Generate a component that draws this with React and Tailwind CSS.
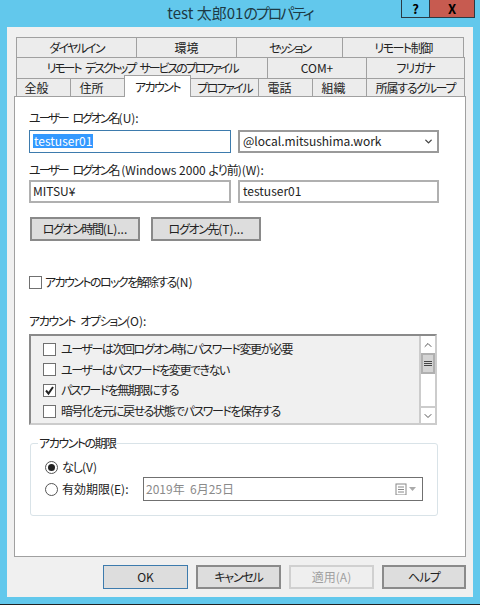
import { ChevronDown, ChevronUp } from 'lucide-react';

const font = { fontFamily: '"Noto Sans CJK JP", "Liberation Sans", sans-serif' };

function Tab({ label, w, className = '' }) {
  return (
    <div style={{ width: w }} className={`flex items-center justify-center border border-b-0 border-[#a0a0a0] -mr-px bg-[#ececec] text-[12px] text-[#222] leading-none whitespace-nowrap ${className}`}>
      {label}
    </div>
  );
}

function Check({ checked }) {
  return (
    <span className="w-[13px] h-[13px] border border-[#707070] bg-white shrink-0 flex items-center justify-center tracking-normal">
      {checked && (
        <svg width="11" height="11" viewBox="0 0 11 11">
          <path d="M2 5.500 L4.500 8.500 L9 2" fill="none" stroke="#222" strokeWidth="2" />
        </svg>
      )}
    </span>
  );
}

function Btn({ children, className = '' }) {
  return (
    <div className={`flex items-center justify-center bg-[#dddddd] border-2 border-[#8a8a8a] text-[12px] text-[#222] whitespace-nowrap ${className}`}>
      {children}
    </div>
  );
}

export default function App() {
  return (
    <div style={font} className="w-[480px] h-[605px] bg-[#62c8ec] flex flex-col overflow-hidden [font-feature-settings:'palt']">
      {/* title bar */}
      <div className="h-[27px] relative flex items-center justify-center text-[15px] text-[#1d3a44] whitespace-pre">
        test 太郎01<span className="tracking-[-2px]">のプロパティ</span>
        <div className="absolute top-0 right-[5px] flex">
          <div className="w-[29px] h-[18px] bg-[#62c8ec] border border-t-0 border-[#2a3a44] flex items-center justify-center text-[13px] font-bold text-black">?</div>
          <div className="w-[45px] h-[18px] bg-[#c75b50] border border-t-0 border-l-0 border-[#2a3a44] flex items-center justify-center text-[13px] font-bold text-black">X</div>
        </div>
      </div>

      {/* dialog body */}
      <div className="mx-[7px] h-[570px] bg-[#f0f0f0] px-[7px] pt-[10px] flex flex-col">
        <div className="h-[59px] flex flex-col">
          <div className="flex h-[20px] ml-[2px]">
            <Tab label="ダイヤルイン" w={121} className="tracking-[-1.7px]" />
            <Tab label="環境" w={101} />
            <Tab label="セッション" w={107} className="tracking-[-2.2px]" />
            <Tab label="リモート制御" w={122} className="tracking-[-1.5px]" />
          </div>
          <div className="flex h-[21px] ml-[2px]">
            <Tab label="リモート デスクトップ サービスのプロファイル" w={252} className="tracking-[-2.1px] [word-spacing:4px]" />
            <Tab label="COM+" w={100} />
            <Tab label="フリガナ" w={99} className="tracking-[-1.2px]" />
          </div>
          <div className="h-[18px] flex ml-[2px]">
            <Tab label="全般" w={55} className="pr-[14px]" />
            <Tab label="住所" w={55} className="pr-[12px]" />
            <div className="w-[67px] h-[22px] -mt-[3px] z-10 bg-white border border-b-0 border-[#a0a0a0] -mr-px flex items-center justify-center text-[12px] text-[#222] leading-none tracking-[-1.6px]">アカウント</div>
            <Tab label="プロファイル" w={69} className="tracking-[-1.6px]" />
            <Tab label="電話" w={55} className="pr-[12px]" />
            <Tab label="組織" w={55} className="pr-[12px]" />
            <Tab label="所属するグループ" w={99} className="tracking-[-1.3px]" />
          </div>
        </div>

        {/* account tab */}
        <div className="w-[452px] h-[461px] bg-white border border-[#a0a0a0] pl-[14px] pt-[14px] text-[12px] text-[#222] leading-none">
          <div className="h-[14px] pt-px tracking-[-2px] [word-spacing:4px]">ユーザー ログオン名<span className="tracking-normal">(U):</span></div>
          <div className="flex gap-[7px] mt-[5px]">
            <div className="w-[202px] h-[23px] border border-[#3d7bad] pl-[3px] pb-[2px] flex items-center">
              <span className="bg-[#3399ff] text-white px-px py-px">testuser01</span>
            </div>
            <div className="w-[201px] h-[23px] border-2 border-[#9a9a9a] pl-[3px] pb-px flex items-center justify-between pr-[3px]">
              @local.mitsushima.work
              <ChevronDown size={11} strokeWidth={3} color="#444" />
            </div>
          </div>
          <div className="h-[14px] pt-px mt-[10px] whitespace-pre">
            <span className="tracking-[-2px] [word-spacing:4px]">ユーザー ログオン名</span>
            <span> (Windows 2000 </span>
            <span className="tracking-[-1px]">より前</span>
            <span>)(W):</span>
          </div>
          <div className="flex gap-[7px] mt-[3px]">
            <div className="w-[202px] h-[23px] border-2 border-[#b0b0b0] pl-[2px] pb-[2px] flex items-center">MITSU¥</div>
            <div className="w-[201px] h-[23px] border-2 border-[#b0b0b0] pl-[3px] pb-[2px] flex items-center">testuser01</div>
          </div>
          <div className="flex gap-[11px] mt-[14px] ml-px">
            <Btn className="w-[110px] h-[24px]"><span className="tracking-[-1.4px]">ログオン時間</span>(L)...</Btn>
            <Btn className="w-[110px] h-[24px]"><span className="tracking-[-1.3px]">ログオン先</span>(T)...</Btn>
          </div>
          <div className="flex items-center gap-[3px] mt-[34px] h-[14px]">
            <Check />
            <span><span className="tracking-[-1.6px]">アカウントのロックを解除する</span>(N)</span>
          </div>
          <div className="h-[14px] pt-px mt-[25px]"><span className="tracking-[-1.4px] [word-spacing:4px]">アカウント オプション</span>(O):</div>
          <div className="w-[408px] h-[91px] mt-[6px] border-2 border-t-[#8a8a8a] border-l-[#8a8a8a] border-r-[#cccccc] border-b-[#cccccc] bg-[#f0f0f0] flex">
            <div className="flex-1 pl-[12px] pt-[6px] flex flex-col gap-[6.7px] tracking-[-1.45px]">
              {[
                ['ユーザーは次回ログオン時にパスワード変更が必要', false],
                ['ユーザーはパスワードを変更できない', false],
                ['パスワードを無期限にする', true],
                ['暗号化を元に戻せる状態でパスワードを保存する', false],
              ].map(([label, on]) => (
                <div key={label} className="flex items-center gap-[5px] h-[14px]">
                  <Check checked={on} />
                  {label}
                </div>
              ))}
            </div>
            <div className="w-[16px] bg-white border-l-2 border-[#cccccc] flex flex-col">
              <div className="h-[17px] flex items-center justify-center"><ChevronUp size={12} color="#555" /></div>
              <div className="h-[21px] bg-[#d4d4d4] border-2 border-[#b0b0b0] flex flex-col items-center justify-center gap-px">
                <div className="w-[8px] h-px bg-[#444]" />
                <div className="w-[8px] h-px bg-[#444]" />
                <div className="w-[8px] h-px bg-[#444]" />
              </div>
              <div className="flex-1" />
              <div className="h-[17px] border-t-2 border-[#cccccc] flex items-center justify-center"><ChevronDown size={12} color="#555" /></div>
            </div>
          </div>

          {/* expiry group */}
          <div className="relative w-[408px] h-[73px] ml-px mt-[18px] border border-[#d9e3e8] rounded-[3px] pl-[14px] pt-[16px]">
            <span className="absolute -top-[7px] left-[7px] bg-white px-px tracking-[-1.5px]">アカウントの期限</span>
            <div className="flex items-center gap-[4px] h-[14px]">
              <span className="w-[13px] h-[13px] rounded-full border border-[#555] flex items-center justify-center">
                <span className="w-[7px] h-[7px] rounded-full bg-[#222]" />
              </span>
              <span><span className="tracking-[-1px]">なし</span>(V)</span>
            </div>
            <div className="flex items-center gap-[4px] mt-[3px]">
              <span className="w-[13px] h-[13px] rounded-full border border-[#555]" />
              <span className="w-[77px]">有効期限(E):</span>
              <div className="w-[280px] h-[24px] border border-[#707070] flex items-center justify-between pl-[2px] pr-[3px] text-[#8a8a8a]">
                2019年 &nbsp;6月25日
                <svg width="24" height="12" viewBox="0 0 24 12">
                  <rect x="1" y="1" width="10" height="11" fill="none" stroke="#888" />
                  <path d="M3 4h6M3 6.500h6M3 9h6" stroke="#888" />
                  <path d="M14 4h7l-3.500 4z" fill="#aaa" />
                </svg>
              </div>
            </div>
          </div>
        </div>

        {/* footer buttons */}
        <div className="flex justify-end gap-[8px] mt-[8px]">
          <div className="w-[85px] h-[24px] bg-[#dddddd] border border-[#3d7bad] flex items-center justify-center text-[12px] text-[#222]">OK</div>
          <Btn className="w-[85px] h-[24px] tracking-[-1.2px]">キャンセル</Btn>
          <div className="w-[85px] h-[24px] bg-[#efefef] border-2 border-[#d0d0d0] flex items-center justify-center text-[12px] text-[#a0a0a0]">適用(A)</div>
          <Btn className="w-[84px] h-[24px] tracking-[-0.7px]">ヘルプ</Btn>
        </div>
      </div>
      <div className="mt-auto h-px bg-[#222]" />
    </div>
  );
}
